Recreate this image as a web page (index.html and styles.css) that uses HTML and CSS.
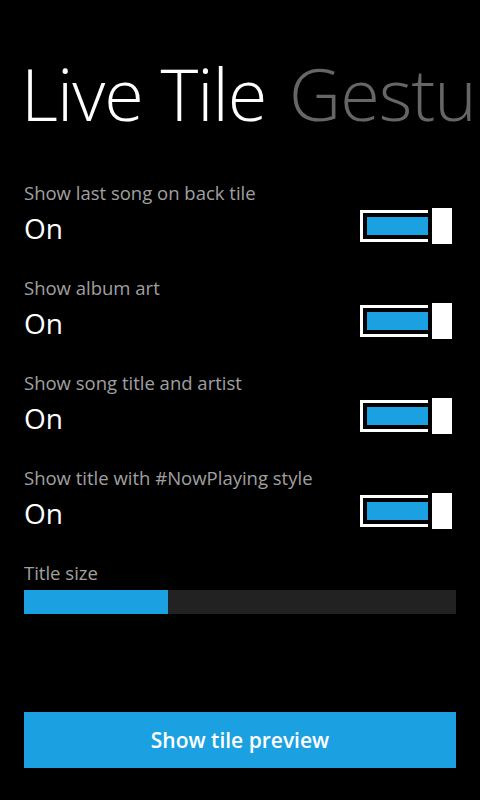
FILE: index.html
```html
<!DOCTYPE html>
<html>
<head>
<meta charset="utf-8">
<link rel="stylesheet" href="styles.css">
</head>
<body>
<div class="page">
  <div class="pivot">
    <span class="pivot-item active">Live Tile</span>
    <span class="pivot-item">Gestures</span>
  </div>
  <div class="settings">
    <div class="setting">
      <div class="label">Show last song on back tile</div>
      <div class="row">
        <span class="state">On</span>
        <div class="toggle"><div class="track"><div class="fill"></div></div><div class="thumb"></div></div>
      </div>
    </div>
    <div class="setting">
      <div class="label">Show album art</div>
      <div class="row">
        <span class="state">On</span>
        <div class="toggle"><div class="track"><div class="fill"></div></div><div class="thumb"></div></div>
      </div>
    </div>
    <div class="setting">
      <div class="label">Show song title and artist</div>
      <div class="row">
        <span class="state">On</span>
        <div class="toggle"><div class="track"><div class="fill"></div></div><div class="thumb"></div></div>
      </div>
    </div>
    <div class="setting">
      <div class="label">Show title with #NowPlaying style</div>
      <div class="row">
        <span class="state">On</span>
        <div class="toggle"><div class="track"><div class="fill"></div></div><div class="thumb"></div></div>
      </div>
    </div>
    <div class="slider-block">
      <div class="label">Title size</div>
      <div class="slider"><div class="slider-fill" style="width: 144px"></div></div>
    </div>
  </div>
  <button class="preview">Show tile preview</button>
</div>
</body>
</html>
```
FILE: styles.css
```css
html, body {
  margin: 0;
  padding: 0;
  background: #000;
}
body {
  width: 480px;
  height: 800px;
  overflow: hidden;
  font-family: "Open Sans", "Noto Sans", sans-serif;
  color: #fff;
}
.page {
  display: flex;
  flex-direction: column;
  height: 800px;
}
.pivot {
  white-space: nowrap;
  overflow: hidden;
  padding: 43px 0 0 21px;
  font-size: 72px;
  font-weight: 300;
  line-height: 100px;
  letter-spacing: -1px;
}
.pivot-item {
  margin-right: 5px;
}
.pivot-item:not(.active) {
  color: #666;
}
.settings {
  padding: 37px 24px 0 24px;
}
.setting {
  height: 95px;
  display: flex;
  flex-direction: column;
}
.label {
  font-size: 18.5px;
  color: #a0a0a0;
  line-height: 26px;
}
.row {
  display: flex;
  align-items: center;
  justify-content: space-between;
  height: 40px;
}
.state {
  font-size: 28px;
  line-height: 40px;
  padding-top: 3px;
}
.toggle {
  display: flex;
  align-items: center;
  gap: 4px;
  margin-right: 4px;
}
.track {
  border: 3px solid #fff;
  border-right: none;
  padding: 4px 0 4px 4px;
  box-sizing: border-box;
  height: 32px;
  width: 68px;
  display: flex;
}
.fill {
  flex: 1;
  background: #1ba1e2;
}
.thumb {
  width: 20px;
  height: 36px;
  background: #fff;
}
.slider {
  margin-top: 4px;
  height: 24px;
  background: #222;
  display: flex;
}
.slider-fill {
  background: #1ba1e2;
}
.preview {
  margin: auto 24px 32px 24px;
  height: 56px;
  border: none;
  background: #1ba1e2;
  color: #fff;
  font-family: "Open Sans", "Noto Sans", sans-serif;
  font-size: 21px;
  font-weight: 600;
}
```
